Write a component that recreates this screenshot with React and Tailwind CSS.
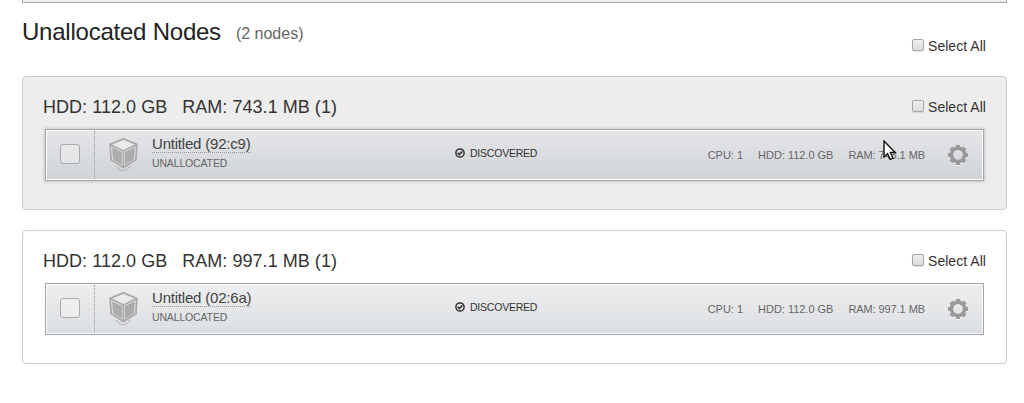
const rowStyles = {
  active:
    'border-[#a3a5a7] bg-linear-to-b from-[#e5e6e8] to-[#cfd3d7] shadow-[inset_0_0_0_1px_#fff,0_0_3px_1px_rgba(0,0,0,0.16)]',
  idle: 'border-[#a3a5a7] bg-linear-to-b from-[#edeeef] to-[#dcdfe2] shadow-[inset_0_0_0_1px_rgba(255,255,255,0.75)]',
};

function SelectAll() {
  return (
    <label className="flex h-5 items-center text-sm tracking-[0.04px] text-[#333]">
      <span className="mr-[4px] -mt-[3px] size-3 rounded-[2px] border border-[#a5a5a5] bg-linear-to-b from-[#eee] to-[#dcdcdc] shadow-[0_1px_1px_rgba(0,0,0,0.1)]" />
      Select All
    </label>
  );
}

function CubeIcon() {
  return (
    <svg className="ml-[13px] h-[36px] w-[30px] shrink-0" viewBox="0 0 30 36" fill="none">
      <path d="M8 29 Q15 38.5 22.5 29" stroke="#b4b4b4" strokeWidth="1.1" />
      <path d="M15.5 1 L29.8 7 L28.8 23.6 L15.5 31.8 L2.2 23.6 L1.2 7 Z" fill="#e9eaeb" />
      <path
        d="M15.5 1.8 L28.8 7.3 L27.9 22.8 L15.5 30.6 L3.1 22.8 L2.2 7.3 Z M2.2 7.6 L15.5 14 L28.8 7.6 M15.5 14 V30"
        stroke="#acacac"
        strokeWidth="1.9"
      />
      <path d="M4.1 10.2 L13.9 14.9 V28 L4.9 22.2 Z M26.9 10.2 L17.1 14.9 V28 L26.1 22.2 Z" fill="#acacac" />
    </svg>
  );
}

function GearShape() {
  return (
    <>
      <circle r="6.6" fill="none" strokeWidth="3.6" />
      <path
        d="M0 -10 V-7 M0 10 V7 M-10 0 H-7 M10 0 H7 M-7.1 -7.1 L-5 -5 M7.1 7.1 L5 5 M-7.1 7.1 L-5 5 M7.1 -7.1 L5 -5"
        strokeWidth="4.2"
      />
    </>
  );
}

function GearIcon() {
  return (
    <svg className="h-[22px] w-[22px] shrink-0" viewBox="-11 -11 22 22">
      <g stroke="#fff" opacity="0.7" transform="translate(0 1)">
        <GearShape />
      </g>
      <g stroke="#999">
        <GearShape />
      </g>
    </svg>
  );
}

function CheckCircle() {
  return (
    <svg className="mr-[5px] size-[10px]" viewBox="0 0 10 10" fill="none" stroke="#333">
      <circle cx="5" cy="5" r="4.1" strokeWidth="1.5" />
      <path d="M2.7 4.9 L4.4 6.5 L7.3 3.4" strokeWidth="1.6" />
    </svg>
  );
}

function Cursor() {
  return (
    <svg className="absolute top-[10px] left-[837px] h-[22px] w-[14px]" viewBox="0 0 14 22">
      <path
        d="M1 1 V17 L4.6 13.6 L7.2 19.4 L10 18.2 L7.4 12.5 H12.2 Z"
        fill="#fff"
        stroke="#111"
        strokeWidth="1.4"
      />
    </svg>
  );
}

function NodeRow({ name, ram, active }) {
  return (
    <div className={`relative ml-[22px] flex h-[52px] w-[939px] border ${active ? rowStyles.active : rowStyles.idle}`}>
      <div className="my-px flex w-[49px] shrink-0 border-r border-dotted border-[#999] pt-[13px] pl-[14px]">
        <span className="size-5 rounded-[3px] border border-[#aaa] bg-white/30" />
      </div>
      <div className="flex pt-[7px]">
        <CubeIcon />
      </div>
      <div className="ml-[14px] w-[303px] pt-[6px]">
        <div className="w-fit border-b border-dotted border-[#999] text-[15px] leading-4 tracking-[-0.2px] text-[#444]">{name}</div>
        <div className="mt-[4px] text-[10.5px] leading-[13px] tracking-[-0.15px] text-[#666]">UNALLOCATED</div>
      </div>
      <div className="flex h-[46px] items-center text-[10.5px] tracking-[-0.22px] text-[#333]">
        <CheckCircle />
        <span className="pt-[2px]">DISCOVERED</span>
      </div>
      <div className="ml-auto flex h-[50px] items-center text-[11px] tracking-[-0.02px] text-[#666]">
        <span className="mr-[15px]">CPU: 1</span>
        <span className="mr-[15px]">HDD: 112.0 GB</span>
        <span className="mr-[22px] tracking-[-0.08px]">RAM: {ram} MB</span>
        <span className="mr-[14px]">
          <GearIcon />
        </span>
      </div>
      {active && <Cursor />}
    </div>
  );
}

function NodeGroup({ name, ram, active }) {
  return (
    <section className={`h-[134px] rounded-[4px] border border-[#ccc] ${active ? 'bg-[#ededed]' : 'bg-white'}`}>
      <div className="flex h-[52px] justify-between pr-5 pl-5">
        <h2 className="flex gap-[15px] pt-[18px] text-lg leading-6 tracking-[0.04px] text-[#333]">
          <span>HDD: 112.0 GB</span>
          <span>RAM: {ram} MB (1)</span>
        </h2>
        <div className="pt-5">
          <SelectAll />
        </div>
      </div>
      <NodeRow name={name} ram={ram} active={active} />
    </section>
  );
}

export default function App() {
  return (
    <main className="h-[403px] w-[1024px] overflow-hidden bg-white pr-[17px] pl-[22px] font-['Liberation_Sans',Arial,sans-serif]">
      <div className="h-[3px] border-x border-b border-[#aaa] bg-[#ededed]" />
      <header className="flex h-[73px] justify-between pr-[21px]">
        <div className="flex pt-[13px]">
          <h1 className="text-2xl leading-8 tracking-[-0.23px] text-[#222]">Unallocated Nodes</h1>
          <span className="ml-[15px] pt-[6px] text-base leading-6 text-[#666]">(2 nodes)</span>
        </div>
        <div className="pt-[33px]">
          <SelectAll />
        </div>
      </header>
      <div className="flex flex-col gap-5">
        <NodeGroup name="Untitled (92:c9)" ram="743.1" active />
        <NodeGroup name="Untitled (02:6a)" ram="997.1" />
      </div>
    </main>
  );
}
